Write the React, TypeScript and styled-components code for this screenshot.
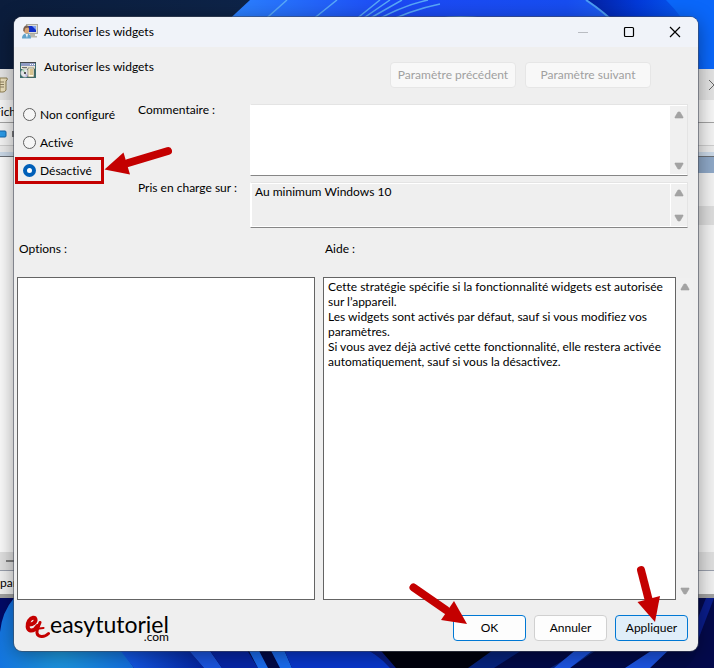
import React, { useState } from "react";
import styled, { createGlobalStyle, css } from "styled-components";

const RED = "#c40000";

const GlobalStyle = createGlobalStyle`
  *, *::before, *::after { box-sizing: border-box; }
  html, body { margin: 0; padding: 0; }
  body, button, textarea, input {
    font-family: Lato, "Open Sans", sans-serif;
    font-size: 12px;
    line-height: 15px;
    font-variant-ligatures: none;
    color: #000;
  }
`;

const Desktop = styled.div`
  position: relative;
  display: flex;
  min-height: 100vh;
  padding: 17px 16px 17px 14px;
  overflow: hidden;
  background: #02094a;
`;

const Wallpaper = styled.svg`
  position: absolute;
  inset: 0;
  width: 100%;
  height: 100%;
`;

const BackWindow = styled.div`
  position: absolute;
  top: 69px;
  bottom: 70px;
  left: 0;
  right: 0;
  display: flex;
  flex-direction: column;
  background: #fff;
  border-bottom: 4px solid #a2a2a2;
`;

const BackRow = styled.div<{ $h: number; $bg: string; $line?: string }>`
  display: flex;
  align-items: center;
  justify-content: space-between;
  flex: none;
  height: ${(p) => p.$h}px;
  background: ${(p) => p.$bg};
  ${(p) => p.$line && css`border-bottom: 1px solid ${p.$line};`}
`;

const MenuText = styled.span`
  margin-left: -6px;
`;

const BackBody = styled.div`
  display: flex;
  flex: 1;
  justify-content: flex-end;
  background: #fbfbfb;
`;

const BackList = styled.div`
  display: flex;
  flex-direction: column;
  width: 50%;
  background: #f3f3f3;
`;

const BackStatus = styled.div`
  display: flex;
  flex: none;
  height: 24px;
  align-items: center;
  background: #f1f1f1;
  border-top: 1px solid #9aa0ad;
`;

const Dialog = styled.section`
  position: relative;
  display: flex;
  flex-direction: column;
  flex: 1;
  min-width: 0;
  border-radius: 8px;
  background: #efefef;
  box-shadow: 0 0 0 1px rgba(70, 75, 90, 0.55), 0 4px 20px rgba(0, 0, 0, 0.4);
`;

const TitleBar = styled.header`
  display: flex;
  align-items: center;
  height: 30px;
  padding-left: 8px;
  gap: 6px;
  border-radius: 8px 8px 0 0;
  background: #f0f3f9;
`;

const Title = styled.h1`
  flex: 1;
  margin: 0;
  padding-bottom: 2px;
  font-size: 12px;
  font-weight: 400;
`;

const CaptionButtons = styled.div`
  display: flex;
`;

const CaptionButton = styled.button`
  display: grid;
  place-items: center;
  width: 46px;
  height: 30px;
  padding: 0;
  border: 0;
  background: none;
`;

const PolicyHeader = styled.div`
  display: flex;
  align-items: flex-start;
  justify-content: space-between;
  padding: 15px 47px 16px 6px;
`;

const PolicyName = styled.div`
  display: flex;
  align-items: flex-start;
  gap: 8px;
  line-height: 10px;
`;

const NavButtons = styled.div`
  display: flex;
  gap: 9px;
`;

const Button = styled.button<{ $kind?: "default" | "hot"; $wide?: boolean }>`
  width: ${(p) => (p.$wide ? 126 : 73)}px;
  height: 26px;
  padding: 0 0 2px;
  white-space: nowrap;
  border-radius: 4px;
  border: 1px solid ${(p) => (p.$kind ? "#0078d4" : "#d0d0d0")};
  background: ${(p) => (p.$kind === "hot" ? "#e0eef9" : "#fdfdfd")};
  &:disabled {
    color: #a0a0a0;
    border-color: #e6e6e6;
    background: #f8f8f8;
  }
`;

const Settings = styled.div`
  display: grid;
  grid-template-columns: 115px 112px 1fr;
  padding: 0 10px 0 9px;
`;

const Radios = styled.fieldset`
  display: flex;
  flex-direction: column;
  gap: 8px;
  grid-row: span 2;
  align-items: flex-start;
  margin: 0;
  padding: 0;
  border: 0;
`;

const RadioLabel = styled.label`
  position: relative;
  display: flex;
  align-items: center;
  height: 20px;
  gap: 4px;
  white-space: nowrap;
`;

const Radio = styled.input`
  appearance: none;
  width: 13px;
  height: 13px;
  margin: 0;
  border: 1px solid #5f5f5f;
  border-radius: 50%;
  background: #f6f6f6;
  &:checked {
    border: 4px solid #005fb8;
    background: #fff;
  }
`;

const Highlight = styled.span`
  position: absolute;
  top: -3px;
  left: -8px;
  width: 89px;
  height: 27px;
  border: 3px solid ${RED};
  pointer-events: none;
`;

const Pointer = styled.svg<{ $x: number; $y: number }>`
  position: absolute;
  left: ${(p) => p.$x}px;
  top: ${(p) => p.$y}px;
  z-index: 2;
  pointer-events: none;
  fill: ${RED};
  stroke: ${RED};
`;

const FieldLabel = styled.label`
  line-height: 12px;
`;

const Field = styled.div<{ $h: number; $readOnly?: boolean }>`
  display: flex;
  height: ${(p) => p.$h}px;
  margin-bottom: 6px;
  border: 1px solid #e4e4e4;
  border-left-color: #fff;
  border-bottom-color: #868686;
  background: ${(p) => (p.$readOnly ? "#efefef" : "#fff")};
  box-shadow: inset 0 0 0 1px #fff;
`;

const TextArea = styled.textarea`
  flex: 1;
  min-width: 0;
  padding: 1px 4px;
  resize: none;
  border: 0;
  outline: 0;
  overflow: hidden;
  background: transparent;
`;

const ScrollTrack = styled.div<{ $edge?: boolean }>`
  display: flex;
  flex-direction: column;
  justify-content: space-between;
  flex: none;
  width: 17px;
  margin: 1px 0;
  border-left: ${(p) => (p.$edge ? "1px solid #fff" : "0")};
  background: #f0f0f0;
`;

const ScrollButton = styled.button`
  display: grid;
  place-items: center;
  width: 100%;
  height: 17px;
  padding: 0;
  border: 0;
  background: none;
`;

const Panes = styled.div`
  display: grid;
  grid-template-columns: 298fr 370fr;
  grid-template-rows: auto 1fr;
  column-gap: 8px;
  row-gap: 21px;
  flex: 1;
  padding: 7px 5px 0 3px;
`;

const PaneLabel = styled.label`
  padding-left: 2px;
`;

const PaneBox = styled.div`
  display: flex;
  flex: 1;
  min-width: 0;
  border: 1px solid #646464;
  background: #fff;
`;

const HelpPane = styled.div`
  display: flex;
`;

const Footer = styled.footer`
  display: flex;
  align-items: flex-start;
  justify-content: space-between;
  padding: 15px 10px 10px 11px;
`;

const Actions = styled.div`
  display: flex;
  gap: 8px;
`;

const ButtonHolder = styled.div`
  position: relative;
`;

const Logo = styled.div`
  display: flex;
  align-items: flex-start;
`;

const LogoText = styled.div`
  display: flex;
  flex-direction: column;
  align-items: flex-end;
`;

const LogoName = styled.span`
  font-size: 23px;
  line-height: 18px;
`;

const LogoSuffix = styled.span`
  font-size: 12px;
  line-height: 8px;
`;

function ScrollBar({ edge }: { edge?: boolean }) {
  return (
    <ScrollTrack $edge={edge}>
      <ScrollButton aria-label="Défiler vers le haut">
        <svg width="10" height="8" viewBox="0 0 10 8">
          <path d="M4 1h2l3 5v1H1V6z" fill="#a3a3a3" stroke="#a3a3a3" strokeWidth=".6" />
        </svg>
      </ScrollButton>
      <ScrollButton aria-label="Défiler vers le bas">
        <svg width="10" height="8" viewBox="0 0 10 8">
          <path d="M4 7h2l3-5V1H1v1z" fill="#a3a3a3" stroke="#a3a3a3" strokeWidth=".6" />
        </svg>
      </ScrollButton>
    </ScrollTrack>
  );
}

function UserMonitorIcon() {
  return (
    <svg width="16" height="16" viewBox="0 0 16 16">
      <rect x="4.5" y=".5" width="11" height="9" fill="#dcdcd4" stroke="#a9a99f" />
      <rect x="6" y="2" width="8" height="6" fill="#1230c8" />
      <path d="M10 2h4v4z" fill="#7fa2f4" />
      <path d="M8 10h5v2h2v1.500H7V12h1z" fill="#b8b8ae" />
      <path d="M0 14.500C0 11 2 9.500 4.500 9.500S9 11 9 14.500z" fill="#5fa3cc" />
      <path d="M3.500 10h2.500l-1 4z" fill="#eef4f8" />
      <ellipse cx="4.500" cy="6" rx="2.700" ry="3.600" fill="#d9a678" />
      <path d="M1.200 7C1 3.500 2.500 1.500 4.800 1.600 6.500 1.700 7.300 3 7 4.200 5.500 3.600 4 3.800 3 4.800L2.500 8z" fill="#7b6250" />
    </svg>
  );
}

function PolicyIcon() {
  return (
    <svg width="16" height="16" viewBox="0 0 16 16">
      <rect width="16" height="16" fill="#3c6e70" />
      <rect width="16" height="1" fill="#44484c" />
      <rect x="1" y="1" width="14" height="3" fill="#8f9bc4" />
      <path d="M10 2h1v1h-1zM12 2h1v1h-1zM14 2h1v1h-1z" fill="#fff" />
      <rect x="1" y="4" width="14" height="3" fill="#e9e6d8" />
      <path d="M2 5h5v1H2z" fill="#6f6f6f" />
      <circle cx="5" cy="11" r="4.300" fill="#e4e6ea" stroke="#96a0a0" strokeWidth=".6" />
      <path d="M5 11 2 8.500 4 7z" fill="#a5d8b0" />
      <path d="M5 11l3 2.500L6 15z" fill="#b7b2e6" />
      <circle cx="5" cy="11" r="1.100" fill="#333" />
      <path d="M8 6h6v9H8z" fill="#fffbe4" stroke="#5a5740" strokeWidth=".6" />
      <path d="M9.500 8h3.500M9.500 10h3.500M9.500 12h3.500" stroke="#b08a3c" />
    </svg>
  );
}

function BrandMark() {
  return (
    <svg width="25" height="25" viewBox="0 0 25 25" fill="none" stroke={RED} strokeLinecap="round" strokeLinejoin="round">
      <path d="M4.500 9.500C8 9.500 11 7 10.500 4.500 10 2 6.500 2 4 5.800 1.800 9.500 2 14.500 5.500 15.500 9.500 16 11 13.500 12.500 11" strokeWidth="4" />
      <path d="M15 7.500C13.500 11.500 11.500 15 12 18 12.500 22 19 23 23.500 18.500" strokeWidth="3" />
      <path d="M10 14 18.500 13" strokeWidth="2.200" />
    </svg>
  );
}

function DesktopArt() {
  return (
    <Wallpaper viewBox="0 0 714 668" preserveAspectRatio="xMidYMid slice" aria-hidden="true">
      <defs>
        <linearGradient id="night">
          <stop offset="0" stopColor="#0b1d3c" />
          <stop offset="1" stopColor="#12305f" />
        </linearGradient>
        <linearGradient id="bloom">
          <stop offset="0" stopColor="#2c84ff" />
          <stop offset=".35" stopColor="#1c49f4" />
          <stop offset=".7" stopColor="#174df0" />
          <stop offset="1" stopColor="#2c82f6" />
        </linearGradient>
        <linearGradient id="edge">
          <stop offset="0" stopColor="#0420a0" />
          <stop offset=".4" stopColor="#0239d8" />
          <stop offset="1" stopColor="#0a6cff" />
        </linearGradient>
        <radialGradient id="glow" cx="60" cy="650" r="130" gradientUnits="userSpaceOnUse">
          <stop offset="0" stopColor="#1d9be0" />
          <stop offset="1" stopColor="#0a4ce0" />
        </radialGradient>
        <linearGradient id="petal">
          <stop offset="0" stopColor="#1560f0" />
          <stop offset="1" stopColor="#0424a0" />
        </linearGradient>
      </defs>
      <rect width="714" height="300" fill="url(#night)" />
      <path d="M222 26 250 0H714V80H222z" fill="url(#bloom)" />
      <g fill="none" stroke="#58a8f8" strokeWidth="1.500">
        <path d="M260 24 287 0M307 24 337 0M350 24 380 0M355 24 390 0M360 24 402 0M366 26Q400 6 428 0M378 26Q410 10 440 4" />
        <path d="M415 24Q460 10 508 24" strokeWidth="2" />
      </g>
      <path d="M586 0 Q604 12 618 26V80H714V0z" fill="url(#edge)" />
      <path d="M586 0Q604 12 618 26" fill="none" stroke="#4b9cf4" strokeWidth="2" />
      <path d="M666 0Q700 34 706 80H714V0z" fill="#0a67fa" />
      <rect y="590" width="714" height="78" fill="#020a48" />
      <path d="M0 668V620Q4 606 14 592L118 645 134 668z" fill="url(#glow)" />
      <path d="M0 598h14Q2 612 0 632z" fill="#020a66" />
      <path d="M134 668 116 645H184L204 668z" fill="url(#petal)" />
      <path d="M184 645h22l16 23h-18z" fill="#1b55e0" />
      <path d="M222 668 206 645h38l14 23z" fill="#0726a8" />
      <path d="M258 668 246 645h10l12 23zM280 668 268 645h14l10 23z" fill="#1a6cf0" />
      <path d="M292 668 282 645h76q22 10 36 23z" fill="#0937cc" />
      <path d="M358 645h20q14 10 18 23h-6q-12-14-32-23z" fill="#0a1d80" />
      <path d="M396 668 376 645H520L480 668z" fill="#01020e" />
      <path d="M468 668 500 645h30l-36 23zM550 668 590 645h14l-34 23z" fill="#06237e" />
      <path d="M554 668 578 648h18l-26 20zM625 668 660 645h14l-24 23z" fill="#1c54e2" />
      <path d="M698 598h16v70h-30q14-8 14-30z" fill="#040a4c" />
      <path d="M714 598 698 640v-22l8-20z" fill="#0a1d8c" />
    </Wallpaper>
  );
}

const choices = ["Non configuré", "Activé", "Désactivé"];

const helpText =
  "Cette stratégie spécifie si la fonctionnalité widgets est autorisée sur l’appareil.\n" +
  "Les widgets sont activés par défaut, sauf si vous modifiez vos paramètres.\n" +
  "Si vous avez déjà activé cette fonctionnalité, elle restera activée automatiquement, sauf si vous la désactivez.";

export default function App() {
  const [choice, setChoice] = useState("Désactivé");
  const [comment, setComment] = useState("");

  return (
    <>
      <GlobalStyle />
      <Desktop>
        <DesktopArt />
        <BackWindow aria-hidden="true">
          <BackRow $h={31} $bg="#e4e4e4">
            <svg width="9" height="16" viewBox="0 0 9 16">
              <path d="M0 1h7q1 2-1 3v9q-1 2-3 2H0z" fill="#ece0bc" stroke="#8f8054" />
              <path d="M0 5h4M0 7.500h4M0 10h4" stroke="#8c7f60" />
            </svg>
            <svg width="6" height="12" viewBox="0 0 6 12">
              <path d="M1 1l10 10M1 11 11 1" stroke="#666" fill="none" />
            </svg>
          </BackRow>
          <BackRow $h={23} $bg="#f7f7f7" $line="#a3a3a3">
            <MenuText>Fichier</MenuText>
          </BackRow>
          <BackRow $h={23} $bg="#f4f4f4" $line="#cfcfcf">
            <svg width="14" height="8" viewBox="0 0 14 8">
              <rect x="-3" y="1" width="9" height="6" rx="1" fill="#2b9be8" stroke="#1567ac" />
              <path d="M13 1v6" stroke="#777" strokeWidth="2" />
            </svg>
          </BackRow>
          <BackRow $h={6} $bg="#ececec" />
          <BackRow $h={5} $bg="#cbd9e8" $line="#6b7076" />
          <BackBody>
            <BackList>
              <BackRow $h={16} $bg="#8fa9c8" />
              <BackRow $h={33} $bg="#f3f3f3" />
              <BackRow $h={19} $bg="#dedede" />
            </BackList>
          </BackBody>
          <BackRow $h={18} $bg="#e0e0e0">
            <svg width="14" height="4" viewBox="0 0 14 4">
              <path d="M6 2h8" stroke="#808080" strokeWidth="2" />
            </svg>
          </BackRow>
          <BackStatus>paramètre(s)</BackStatus>
        </BackWindow>

        <Dialog role="dialog" aria-labelledby="dialog-title">
          <TitleBar>
            <UserMonitorIcon />
            <Title id="dialog-title">Autoriser les widgets</Title>
            <CaptionButtons>
              <CaptionButton aria-label="Réduire" disabled>
                <svg width="12" height="12" viewBox="0 0 12 12">
                  <path d="M1 6.500h10" stroke="#b9bcc2" />
                </svg>
              </CaptionButton>
              <CaptionButton aria-label="Agrandir">
                <svg width="12" height="12" viewBox="0 0 12 12">
                  <rect x="1.500" y="1.500" width="9" height="9" rx="1" fill="none" stroke="#000" strokeWidth="1.200" />
                </svg>
              </CaptionButton>
              <CaptionButton aria-label="Fermer">
                <svg width="12" height="12" viewBox="0 0 12 12">
                  <path d="M1 1l10 10M1 11 11 1" stroke="#000" strokeWidth="1.200" />
                </svg>
              </CaptionButton>
            </CaptionButtons>
          </TitleBar>

          <PolicyHeader>
            <PolicyName>
              <PolicyIcon />
              <span>Autoriser les widgets</span>
            </PolicyName>
            <NavButtons>
              <Button $wide disabled>Paramètre précédent</Button>
              <Button $wide disabled>Paramètre suivant</Button>
            </NavButtons>
          </PolicyHeader>

          <Settings>
            <Radios aria-label="État de la stratégie">
              {choices.map((name) => (
                <RadioLabel key={name}>
                  <Radio type="radio" name="state" checked={choice === name} onChange={() => setChoice(name)} />
                  {name}
                  {name === "Désactivé" && (
                    <>
                      <Highlight />
                      <Pointer $x={81} $y={-16} width="70" height="32" viewBox="0 0 70 32">
                        <path d="M64 7 24 19" strokeWidth="8" strokeLinecap="round" />
                        <path d="M.500 25.500 19.500 8.500 26 30.500z" stroke="none" />
                      </Pointer>
                    </>
                  )}
                </RadioLabel>
              ))}
            </Radios>
            <FieldLabel htmlFor="comment">Commentaire :</FieldLabel>
            <Field $h={72}>
              <TextArea id="comment" value={comment} onChange={(e) => setComment(e.target.value)} />
              <ScrollBar />
            </Field>
            <FieldLabel htmlFor="supported">Pris en charge sur :</FieldLabel>
            <Field $h={46} $readOnly>
              <TextArea id="supported" readOnly value="Au minimum Windows 10" />
              <ScrollBar edge />
            </Field>
          </Settings>

          <Panes>
            <PaneLabel as="span">Options :</PaneLabel>
            <PaneLabel htmlFor="help">Aide :</PaneLabel>
            <PaneBox />
            <HelpPane>
              <PaneBox>
                <TextArea id="help" readOnly value={helpText} />
              </PaneBox>
              <ScrollBar />
            </HelpPane>
          </Panes>

          <Footer>
            <Logo>
              <BrandMark />
              <LogoText>
                <LogoName>easytutoriel</LogoName>
                <LogoSuffix>.com</LogoSuffix>
              </LogoText>
            </Logo>
            <Actions>
              <ButtonHolder>
                <Button $kind="default">OK</Button>
                <Pointer $x={-45} $y={-34} width="62" height="48" viewBox="0 0 62 48">
                  <path d="M5.500 6.500 38 29" strokeWidth="8" strokeLinecap="round" />
                  <path d="M59 43 46 20 33 39z" stroke="none" />
                </Pointer>
              </ButtonHolder>
              <Button>Annuler</Button>
              <ButtonHolder>
                <Button $kind="hot">Appliquer</Button>
                <Pointer $x={20} $y={-50} width="28" height="58" viewBox="0 0 28 58">
                  <path d="M6 5 14 36" strokeWidth="8" strokeLinecap="round" />
                  <path d="M20 57 2.500 37 25 31z" stroke="none" />
                </Pointer>
              </ButtonHolder>
            </Actions>
          </Footer>
        </Dialog>
      </Desktop>
    </>
  );
}
